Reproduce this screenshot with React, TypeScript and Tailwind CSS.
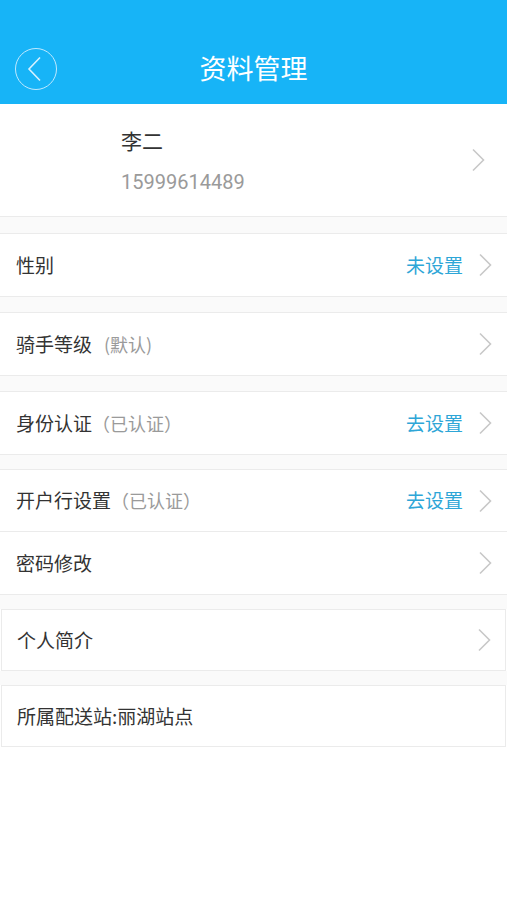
const FONT = "font-['Noto_Sans_CJK_SC','Noto_Sans',sans-serif]";

function Chevron({ className = "" }: { className?: string }) {
  return (
    <svg width="14" height="24" viewBox="0 0 14 24" className={className} fill="none">
      <path d="M2 1.5 L12.5 12 L2 22.5" stroke="#c8c8c8" strokeWidth="1.6" />
    </svg>
  );
}

type Row = {
  label: string;
  note?: string;
  noteParen?: "half" | "full";
  action?: string;
  arrow?: boolean;
};

function ItemRow({ label, note, noteParen, action, arrow = true }: Row) {
  return (
    <div className="flex h-[62px] items-center pl-4 pr-[15px]">
      <span className="text-[19px] text-[#333]">{label}</span>
      {note && (
        <span
          className={`text-[18px] text-[#9a9a9a] ${noteParen === "half" ? "ml-3" : ""}`}
        >
          {noteParen === "half" ? `(${note})` : `（${note}）`}
        </span>
      )}
      <div className="ml-auto flex items-center">
        {action && (
          <span className="mr-[15px] text-[19px] text-[#2ea6d7]">{action}</span>
        )}
        {arrow && <Chevron />}
      </div>
    </div>
  );
}

export default function App() {
  return (
    <div className={`min-h-[900px] bg-white ${FONT}`}>
      <header className="relative flex h-[104px] items-center justify-center bg-[#17b4f7] pt-[30px]">
        <div className="absolute left-[15px] top-[48px] flex h-[42px] w-[42px] items-center justify-center rounded-full border-[1.5px] border-[#bfe9ff]">
          <svg width="16" height="26" viewBox="0 0 16 26" fill="none" className="mr-[3px]">
            <path d="M13 1.5 L2 13 L13 24.5" stroke="#d6f1ff" strokeWidth="1.6" />
          </svg>
        </div>
        <h1 className="text-[27px] font-normal leading-none text-white">资料管理</h1>
      </header>

      <section className="flex h-[113px] items-center border-b border-[#ebebeb] pl-[121px] pr-[22px]">
        <div className="flex flex-col">
          <span className="text-[21px] leading-[28px] text-[#333]">李二</span>
          <span className="mt-[16px] font-['Roboto',sans-serif] text-[20px] leading-[24px] text-[#9a9a9a]">
            15999614489
          </span>
        </div>
        <Chevron className="ml-auto" />
      </section>

      <div className="h-4 bg-[#fafafa]" />
      <section className="border-y border-[#ebebeb]">
        <ItemRow label="性别" action="未设置" />
      </section>

      <div className="h-[15px] bg-[#fafafa]" />
      <section className="border-y border-[#ebebeb]">
        <ItemRow label="骑手等级" note="默认" noteParen="half" />
      </section>

      <div className="h-[15px] bg-[#fafafa]" />
      <section className="border-y border-[#ebebeb]">
        <ItemRow label="身份认证" note="已认证" noteParen="full" action="去设置" />
      </section>

      <div className="h-[14px] bg-[#fafafa]" />
      <section className="divide-y divide-[#ebebeb] border-y border-[#ebebeb]">
        <ItemRow label="开户行设置" note="已认证" noteParen="full" action="去设置" />
        <ItemRow label="密码修改" />
      </section>

      <div className="h-[14px] bg-[#fafafa]" />
      <section className="mx-px border border-[#ebebeb]">
        <div className="flex h-[60px] items-center pl-[15px] pr-[14px]">
          <span className="text-[19px] text-[#333]">个人简介</span>
          <Chevron className="ml-auto" />
        </div>
      </section>

      <div className="h-[14px] bg-[#fafafa]" />
      <section className="mx-px border border-[#ebebeb]">
        <div className="flex h-[60px] items-center pl-[15px]">
          <span className="text-[19px] text-[#333]">所属配送站:丽湖站点</span>
        </div>
      </section>
    </div>
  );
}
